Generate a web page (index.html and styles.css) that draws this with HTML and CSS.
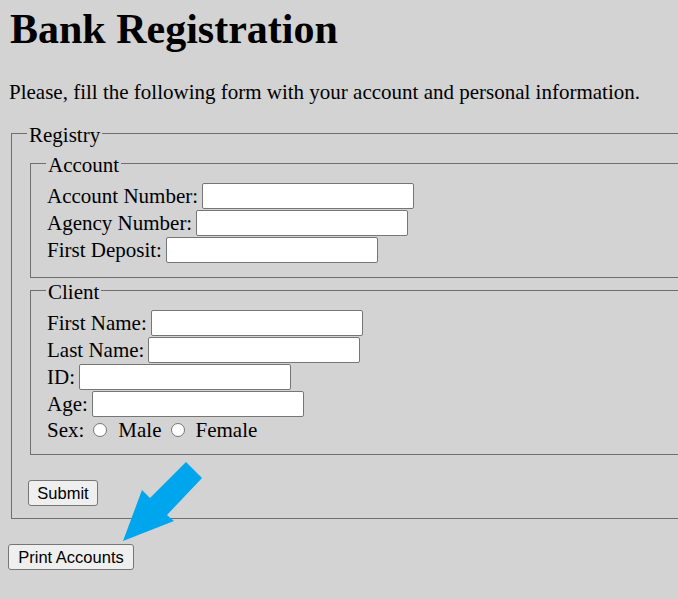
FILE: index.html
```html
<!DOCTYPE html>
<html lang="en">
<head>
<meta charset="utf-8">
<title>Bank Registration</title>
<link rel="stylesheet" href="styles.css">
</head>
<body>
<div class="page">
  <h1 class="title">Bank Registration</h1>
  <p class="intro">Please, fill the following form with your account and personal information.</p>
  <form class="registry">
    <fieldset class="box outer">
      <legend class="legend">Registry</legend>
      <fieldset class="box inner">
        <legend class="legend">Account</legend>
        <div class="row"><label class="lbl" for="acc">Account Number:</label><input class="field" id="acc" type="text"></div>
        <div class="row"><label class="lbl" for="agency">Agency Number:</label><input class="field" id="agency" type="text"></div>
        <div class="row"><label class="lbl" for="dep">First Deposit:</label><input class="field" id="dep" type="text"></div>
      </fieldset>
      <fieldset class="box inner">
        <legend class="legend">Client</legend>
        <div class="row"><label class="lbl" for="fn">First Name:</label><input class="field" id="fn" type="text"></div>
        <div class="row"><label class="lbl" for="ln">Last Name:</label><input class="field" id="ln" type="text"></div>
        <div class="row"><label class="lbl" for="id">ID:</label><input class="field" id="id" type="text"></div>
        <div class="row"><label class="lbl" for="age">Age:</label><input class="field" id="age" type="text"></div>
        <div class="row sex"><span class="lbl">Sex:</span><input class="radio" type="radio" name="sex" id="male"><label class="lbl" for="male">Male</label><input class="radio" type="radio" name="sex" id="female"><label class="lbl" for="female">Female</label></div>
      </fieldset>
      <button class="btn submit" type="button">Submit</button>
    </fieldset>
  </form>
  <button class="btn print" type="button">Print Accounts</button>
  <svg class="arrow" width="100" height="95" viewBox="0 0 100 95" aria-hidden="true">
    <polygon points="13,86 32,35 40,43 76,7 92,23 57,60 64,66" fill="#00a6ed"/>
  </svg>
</div>
</body>
</html>
```
FILE: styles.css
```css
html, body {
  margin: 0;
  padding: 0;
  overflow: hidden;
  background: #d3d3d3;
}
body {
  font-family: "Liberation Serif", "Times New Roman", serif;
  font-size: 21px;
  color: #000;
}
.page {
  position: relative;
  padding: 0 0 20px 8px;
  width: 1000px;
}
.title {
  margin: 5px 0 0 2px;
  font-size: 42px;
  line-height: 48px;
  font-weight: bold;
}
.intro {
  margin: 27px 0 0 1px;
  line-height: 24px;
}
.registry {
  margin: 17px 0 0 0;
}
.box {
  border: 1px solid #6f6f6f;
  margin: 0;
  min-width: 0;
}
.outer {
  margin-left: 3px;
  width: 900px;
  padding: 6px 15px 12px 15px;
}
.inner {
  margin: 0 0 0 3px;
  padding: 8px 15px 13px 15px;
}
.legend {
  padding: 4px 2px 0 2px;
  line-height: 20px;
}
.row {
  display: flex;
  align-items: flex-start;
  height: 27px;
}
.row .lbl {
  line-height: 22px;
  padding: 2px 0 2px 1px;
}
.field {
  box-sizing: border-box;
  width: 212px;
  height: 26px;
  margin: 0 0 0 4px;
  border: 1px solid #767676;
  border-radius: 2px;
  background: #fff;
  padding: 1px 3px;
  font-size: 16px;
}
.sex {
  height: 23px;
  align-items: center;
}
.sex .lbl {
  padding-top: 0;
  padding-bottom: 0;
}
.radio {
  appearance: none;
  -webkit-appearance: none;
  box-sizing: border-box;
  width: 14px;
  height: 14px;
  margin: 0 10px 0 9px;
  border: 1px solid #767676;
  border-radius: 50%;
  background: #fff;
}
.btn {
  font-family: "Liberation Sans", Arial, sans-serif;
  font-size: 16.5px;
  color: #000;
  background: #efefef;
  border: 1px solid #767676;
  border-radius: 3px;
  height: 26px;
  line-height: 24px;
  padding: 0;
}
.submit {
  display: block;
  margin: 25px 0 0 1px;
  width: 70px;
}
.print {
  display: block;
  margin: 25px 0 0 0;
  width: 126px;
}
.arrow {
  position: absolute;
  left: 110px;
  top: 450px;
}
```
